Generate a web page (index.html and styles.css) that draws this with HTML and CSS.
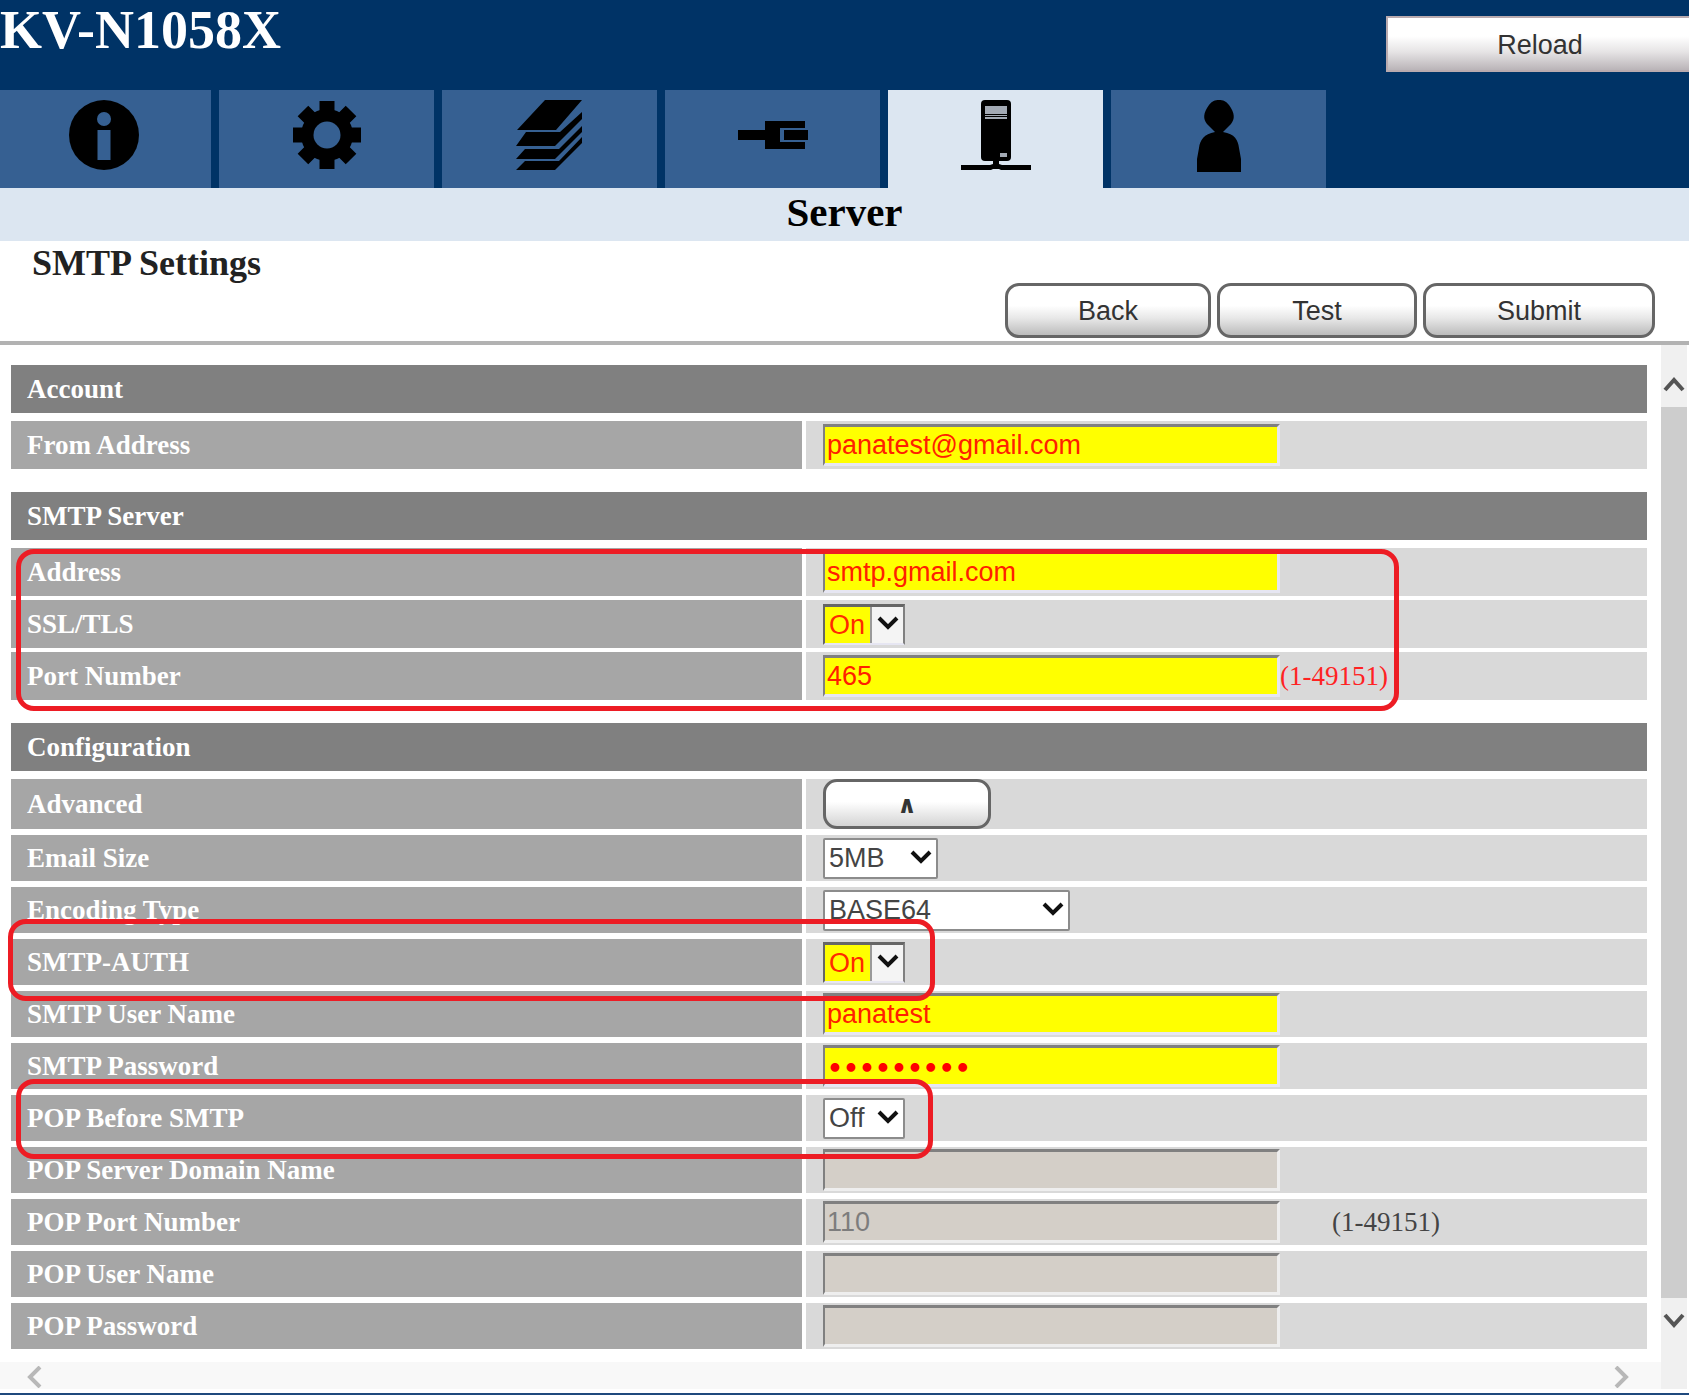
FILE: index.html
```html
<!DOCTYPE html>
<html lang="en">
<head>
<meta charset="utf-8">
<meta name="viewport" content="width=device-width, initial-scale=1">
<title>KV-N1058X - SMTP Settings</title>
<link rel="stylesheet" href="styles.css">
</head>
<body>
<svg class="defs" aria-hidden="true"><symbol id="chevron" viewBox="0 0 22 16"><path d="M2 3l9 9 9-9" fill="none" stroke="currentColor" stroke-width="4"/></symbol></svg>
<header class="masthead">
  <div class="masthead-top">
    <h1 class="product">KV-N1058X</h1>
    <button class="reload" type="button">Reload</button>
  </div>
  <nav class="tabs" aria-label="Sections">
    <a class="tab" href="#info" aria-label="Information"><svg viewBox="0 0 72 72"><ellipse cx="36" cy="36" rx="35" ry="35"/><g class="knock"><circle cx="36" cy="20" r="7"/><path d="M29.500 31h13v30h-13z"/></g></svg></a>
    <a class="tab" href="#device" aria-label="Device"><svg viewBox="0 0 72 72"><circle cx="36" cy="36" r="26"/><g><path id="tooth" d="M28.500 2h15v68h-15zM2 28.500h68v15H2z"/><use href="#tooth" transform="rotate(45 36 36)"/></g><circle class="knock" cx="36" cy="36" r="13.500"/></svg></a>
    <a class="tab" href="#scan" aria-label="Scan"><svg viewBox="0 0 72 72"><path d="M31 1h37L42 31H3zM12 33h34L68 13v7L41 47H2zM11 50h34L68 27v6L41 60H2zM11 62h34L68 38v6L41 71H2z"/></svg></a>
    <a class="tab" href="#network" aria-label="Network"><svg viewBox="0 0 72 72"><path d="M1 31h27v-9h40v7H43v14h25v7H28v-9H1zM47 31h24v10H47z"/></svg></a>
    <a class="tab active" href="#server" aria-label="Server" aria-current="page"><svg viewBox="0 0 72 72"><rect x="21" y="1" width="30" height="61" rx="4"/><path d="M33 60h6v5l3 1h29v5H41l-2-1h-6l-2 1H1v-5h29l3-1z"/><g class="vent"><path d="M25 7h22v8H25zM25 16h22v1H25zM25 18h22v2H25zM40 54h7v4h-7z"/></g></svg></a>
    <a class="tab" href="#user" aria-label="User"><svg viewBox="0 0 72 72"><path d="M36 1c4 0 7 1 10 5 6 8 6 14 2 19l-8 8c12 2 15 8 16 16l2 11v13H14V60l2-11c1-8 5-14 16-16l-8-8c-4-5-4-11 2-19 3-4 6-5 10-5z"/></svg></a>
  </nav>
</header>
<h2 class="band">Server</h2>
<form class="page">
  <div class="toolbar">
    <h3 class="heading">SMTP Settings</h3>
    <div class="actions">
      <button class="btn back" type="button">Back</button>
      <button class="btn test" type="button">Test</button>
      <button class="btn submit" type="submit">Submit</button>
    </div>
  </div>
  <div class="viewport">
    <div class="pane">
      <div class="content">
        <section class="group">
          <h4 class="group-title">Account</h4>
          <div class="rows">
            <div class="row"><label class="name" for="from">From Address</label><div class="value"><input class="field changed" id="from" type="text" value="panatest@gmail.com"></div></div>
          </div>
        </section>
        <section class="group">
          <h4 class="group-title">SMTP Server</h4>
          <div class="rows">
            <div class="row"><label class="name" for="addr">Address</label><div class="value"><input class="field changed" id="addr" type="text" value="smtp.gmail.com"></div></div>
            <div class="row"><label class="name" for="ssl">SSL/TLS</label><div class="value"><span class="pick changed"><select id="ssl"><option>On</option><option>Off</option></select><svg aria-hidden="true"><use href="#chevron"/></svg></span></div></div>
            <div class="row"><label class="name" for="port">Port Number</label><div class="value"><input class="field changed" id="port" type="text" value="465"><span class="range changed-text">(1-49151)</span></div></div>
            <div class="mark mark-server"></div>
          </div>
        </section>
        <section class="group">
          <h4 class="group-title">Configuration</h4>
          <div class="rows compact">
            <div class="row tall"><span class="name">Advanced</span><div class="value"><button class="btn toggle" type="button" aria-label="Hide advanced settings">∧</button></div></div>
            <div class="row"><label class="name" for="size">Email Size</label><div class="value"><span class="pick size"><select id="size"><option>5MB</option></select><svg aria-hidden="true"><use href="#chevron"/></svg></span></div></div>
            <div class="row"><label class="name" for="enc">Encoding Type</label><div class="value"><span class="pick encoding"><select id="enc"><option>BASE64</option></select><svg aria-hidden="true"><use href="#chevron"/></svg></span></div></div>
            <div class="row"><label class="name" for="auth">SMTP-AUTH</label><div class="value"><span class="pick changed"><select id="auth"><option>On</option><option>Off</option></select><svg aria-hidden="true"><use href="#chevron"/></svg></span></div><div class="mark mark-auth"></div></div>
            <div class="row"><label class="name" for="user">SMTP User Name</label><div class="value"><input class="field changed" id="user" type="text" value="panatest"></div></div>
            <div class="row"><label class="name" for="pass">SMTP Password</label><div class="value"><input class="field changed secret" id="pass" type="password" value="password1"></div></div>
            <div class="row"><label class="name" for="pop">POP Before SMTP</label><div class="value"><span class="pick"><select id="pop"><option>Off</option><option>On</option></select><svg aria-hidden="true"><use href="#chevron"/></svg></span></div><div class="mark mark-pop"></div></div>
            <div class="row"><label class="name" for="popdom">POP Server Domain Name</label><div class="value"><input class="field" id="popdom" type="text" disabled></div></div>
            <div class="row"><label class="name" for="popport">POP Port Number</label><div class="value"><input class="field" id="popport" type="text" value="110" disabled><span class="range apart">(1-49151)</span></div></div>
            <div class="row"><label class="name" for="popuser">POP User Name</label><div class="value"><input class="field" id="popuser" type="text" disabled></div></div>
            <div class="row"><label class="name" for="poppass">POP Password</label><div class="value"><input class="field" id="poppass" type="password" disabled></div></div>
          </div>
        </section>
      </div>
      <div class="hbar" aria-hidden="true">
        <svg viewBox="0 0 16 22"><path d="M14 1L4 11l10 10"/></svg>
        <svg viewBox="0 0 16 22"><path d="M2 1l10 10L2 21"/></svg>
      </div>
    </div>
    <div class="vbar" aria-hidden="true">
      <svg viewBox="0 0 22 16"><path d="M2 14l9-10 9 10"/></svg>
      <div class="thumb"></div>
      <svg viewBox="0 0 22 16"><path d="M2 2l9 10 9-10"/></svg>
    </div>
  </div>
</form>
</body>
</html>
```

FILE: styles.css
```css
* { box-sizing: border-box; }

body {
  margin: 0;
  overflow-x: hidden;
  background: #fff;
  color: #222;
  font: 27px/32px "Liberation Serif", "Times New Roman", serif;
}

h1, h2, h3, h4 { margin: 0; font-weight: bold; }

.defs { display: none; }

/* Masthead and section tabs */
.masthead { background: #003366; overflow: hidden; }

.masthead-top {
  display: flex;
  justify-content: space-between;
  height: 90px;
}

.product { color: #fff; font-size: 54px; line-height: 60px; }

.reload {
  width: 308px;
  height: 56px;
  margin: 16px -5px 0 0;
  padding: 2px 0 0;
  border: 2px solid #b9aaae;
  background: linear-gradient(#fff 35%, #e6e4e5 65%, #bab4b8);
  color: #333;
  font: 27px "Liberation Sans", Arial, sans-serif;
}

.tabs { display: flex; gap: 8px; margin-left: -4px; }

.tab {
  display: flex;
  justify-content: center;
  width: 215px;
  height: 98px;
  padding-top: 9px;
  background: #366092;
  color: #366092;
}

.tab svg { width: 72px; height: 72px; overflow: visible; fill: #000; }
.tab .knock { fill: currentColor; }
.tab .vent { fill: #a3aab4; }
.tab.active { background: #dce6f1; }

.band {
  padding: 3px 0 8px;
  background: #dce6f1;
  color: #000;
  font-size: 41px;
  line-height: 42px;
  text-align: center;
}

/* Heading and form buttons */
.toolbar { padding-bottom: 3px; border-bottom: 4px solid #b2b2b2; }
.heading { padding: 2px 32px 0; font-size: 36px; line-height: 40px; }

.actions {
  display: flex;
  justify-content: flex-end;
  gap: 6px;
  padding-right: 34px;
}

.btn {
  height: 55px;
  padding: 2px 0 0;
  border: 3px solid #666;
  border-radius: 14px;
  background: linear-gradient(#fff 40%, #e8e8e8 65%, #bcbcbc);
  color: #333;
  font: 27px "Liberation Sans", Arial, sans-serif;
}

.back { width: 206px; }
.test { width: 200px; }
.submit { width: 232px; }

.toggle {
  width: 168px;
  height: 50px;
  background: linear-gradient(#fff 45%, #d4d4d4);
  font: bold 24px "DejaVu Sans", sans-serif;
}

/* Scrolling area */
.viewport {
  display: flex;
  gap: 14px;
  padding: 0 2px 4px 0;
  border-bottom: 3px solid #1f497d;
}

.pane { flex: 1; min-width: 0; }

.content {
  display: grid;
  gap: 23px;
  padding: 20px 0 13px 11px;
}

.group { display: grid; gap: 8px; }

.group-title {
  padding: 8px 16px;
  background: #808080;
  color: #fff;
  font-size: 27px;
}

.rows { display: grid; gap: 4px; position: relative; }
.rows.compact { gap: 6px; }

.row {
  display: grid;
  grid-template-columns: 791fr 841fr;
  gap: 4px;
  min-height: 48px;
  position: relative;
}

.compact .row { min-height: 46px; }
.compact .tall { min-height: 50px; }

.name, .value { display: flex; align-items: center; }
.name { padding: 0 16px; background: #a6a6a6; color: #fff; font-weight: bold; }
.value { padding-left: 17px; background: #d9d9d9; }

/* Fields */
.field {
  width: 457px;
  height: 42px;
  padding: 0 2px;
  border: 3px solid #eee;
  border-top-color: #808080;
  border-left: 2px solid #808080;
  background: #d4cfc8;
  color: #7d7d7d;
  font: 27px "Liberation Sans", Arial, sans-serif;
}

.field.changed { background: #ff0; border-right-color: #e6e6f2; border-bottom-color: #e6e6f2; color: #ff2000; }
.field.secret { padding-top: 4px; color: #f00; font: bold 25px "DejaVu Sans", sans-serif; }

.range { color: #444; }
.changed-text { color: #f22; }
.apart { margin-left: 52px; }

.pick { display: grid; align-items: center; width: 82px; height: 41px; }
.pick.size { width: 115px; }
.pick.encoding { width: 247px; }

.pick select {
  grid-area: 1 / 1;
  width: 100%;
  height: 100%;
  padding: 0 4px;
  appearance: none;
  border: 2px solid #8c8c8c;
  border-radius: 2px;
  background: #fff;
  color: #444;
  font: 27px "Liberation Sans", Arial, sans-serif;
}

.pick svg {
  grid-area: 1 / 1;
  justify-self: end;
  width: 22px;
  height: 16px;
  margin: 0 6px 3px 0;
  color: #111;
  pointer-events: none;
}

.pick.changed select {
  border-color: #666 #808080 #e6e6f2 #666;
  border-top-width: 3px;
  border-radius: 0;
  background: linear-gradient(90deg, #ff0 45px, #999 45px, #999 47px, #f4f4f4 47px);
  color: #ff2a00;
}

/* Red call-out outlines */
.mark {
  position: absolute;
  z-index: 1;
  border: 5px solid #ed1c24;
  border-radius: 18px;
  pointer-events: none;
}

.mark-server { top: 1px; bottom: -11px; left: 5px; width: calc(49% + 581px); }
.mark-auth { top: -20px; bottom: -16px; left: -3px; width: calc(49% + 125px); }
.mark-pop { top: -16px; bottom: -18px; left: 5px; width: calc(49% + 115px); }

/* Scroll bars */
.hbar {
  display: flex;
  align-items: center;
  justify-content: space-between;
  height: 27px;
  margin-right: -14px;
  padding: 2px 31px 0 26px;
  background: #f8f8f8;
}

.hbar svg { width: 16px; height: 22px; fill: none; stroke: #b8b8b8; stroke-width: 4; }

.vbar {
  display: flex;
  flex-direction: column;
  align-items: center;
  gap: 15px;
  width: 26px;
  padding: 31px 0 60px;
  background: #f0f0f0;
}

.vbar svg { width: 22px; height: 16px; fill: none; stroke: #555; stroke-width: 4; }
.thumb { flex: 1; width: 100%; background: #cdcdcd; }
```
